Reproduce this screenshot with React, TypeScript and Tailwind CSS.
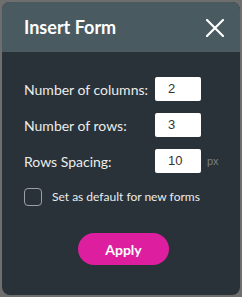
export default function App() {
  const rows = [
    { label: "Number of columns:", value: "2", unit: "" },
    { label: "Number of rows:", value: "3", unit: "" },
    { label: "Rows Spacing:", value: "10", unit: "px" },
  ];

  return (
    <div className="w-[242px] h-[297px] bg-[#6e6e6e] p-[2px] font-['Lato',sans-serif]">
      <div className="w-[238px] h-[293px] rounded-[8px] overflow-hidden bg-[#283238] flex flex-col">
        {/* Header */}
        <div className="h-[50px] bg-[#4a5a61] flex items-center justify-between pl-[22px] pr-[16px]">
          <span className="text-white text-[18px] font-bold">Insert Form</span>
          <svg width="18" height="18" viewBox="0 0 18 18" className="mt-[1px]">
            <path d="M1 1 L17 17 M17 1 L1 17" stroke="white" strokeWidth="2.2" strokeLinecap="round" />
          </svg>
        </div>

        {/* Body */}
        <div className="flex flex-col pl-[22px] pt-[25px]">
          {rows.map((r) => (
            <div key={r.label} className="flex items-center h-[24px] mb-[12px]">
              <span className="w-[131px] text-[#ececec] text-[14px]">{r.label}</span>
              <div className="w-[46px] h-[24px] bg-white rounded-[2px] flex items-center pl-[13px] text-[13px] text-[#333] font-['Liberation_Sans',sans-serif]">
                {r.value}
              </div>
              {r.unit && <span className="ml-[6px] text-[11px] text-[#7a7f82] font-['Liberation_Sans',sans-serif]">{r.unit}</span>}
            </div>
          ))}

          <div className="flex items-center mt-[3px]">
            <div className="w-[18px] h-[18px] rounded-[4px] border border-[#9aa0a3]" />
            <span className="ml-[10px] text-[#ececec] text-[12px]">Set as default for new forms</span>
          </div>
        </div>

        <div className="flex justify-center mt-[27px] pl-[5px]">
          <button className="w-[91px] h-[32px] rounded-full bg-[#dd1e9e] text-white text-[14px] font-bold">
            Apply
          </button>
        </div>
      </div>
    </div>
  );
}
